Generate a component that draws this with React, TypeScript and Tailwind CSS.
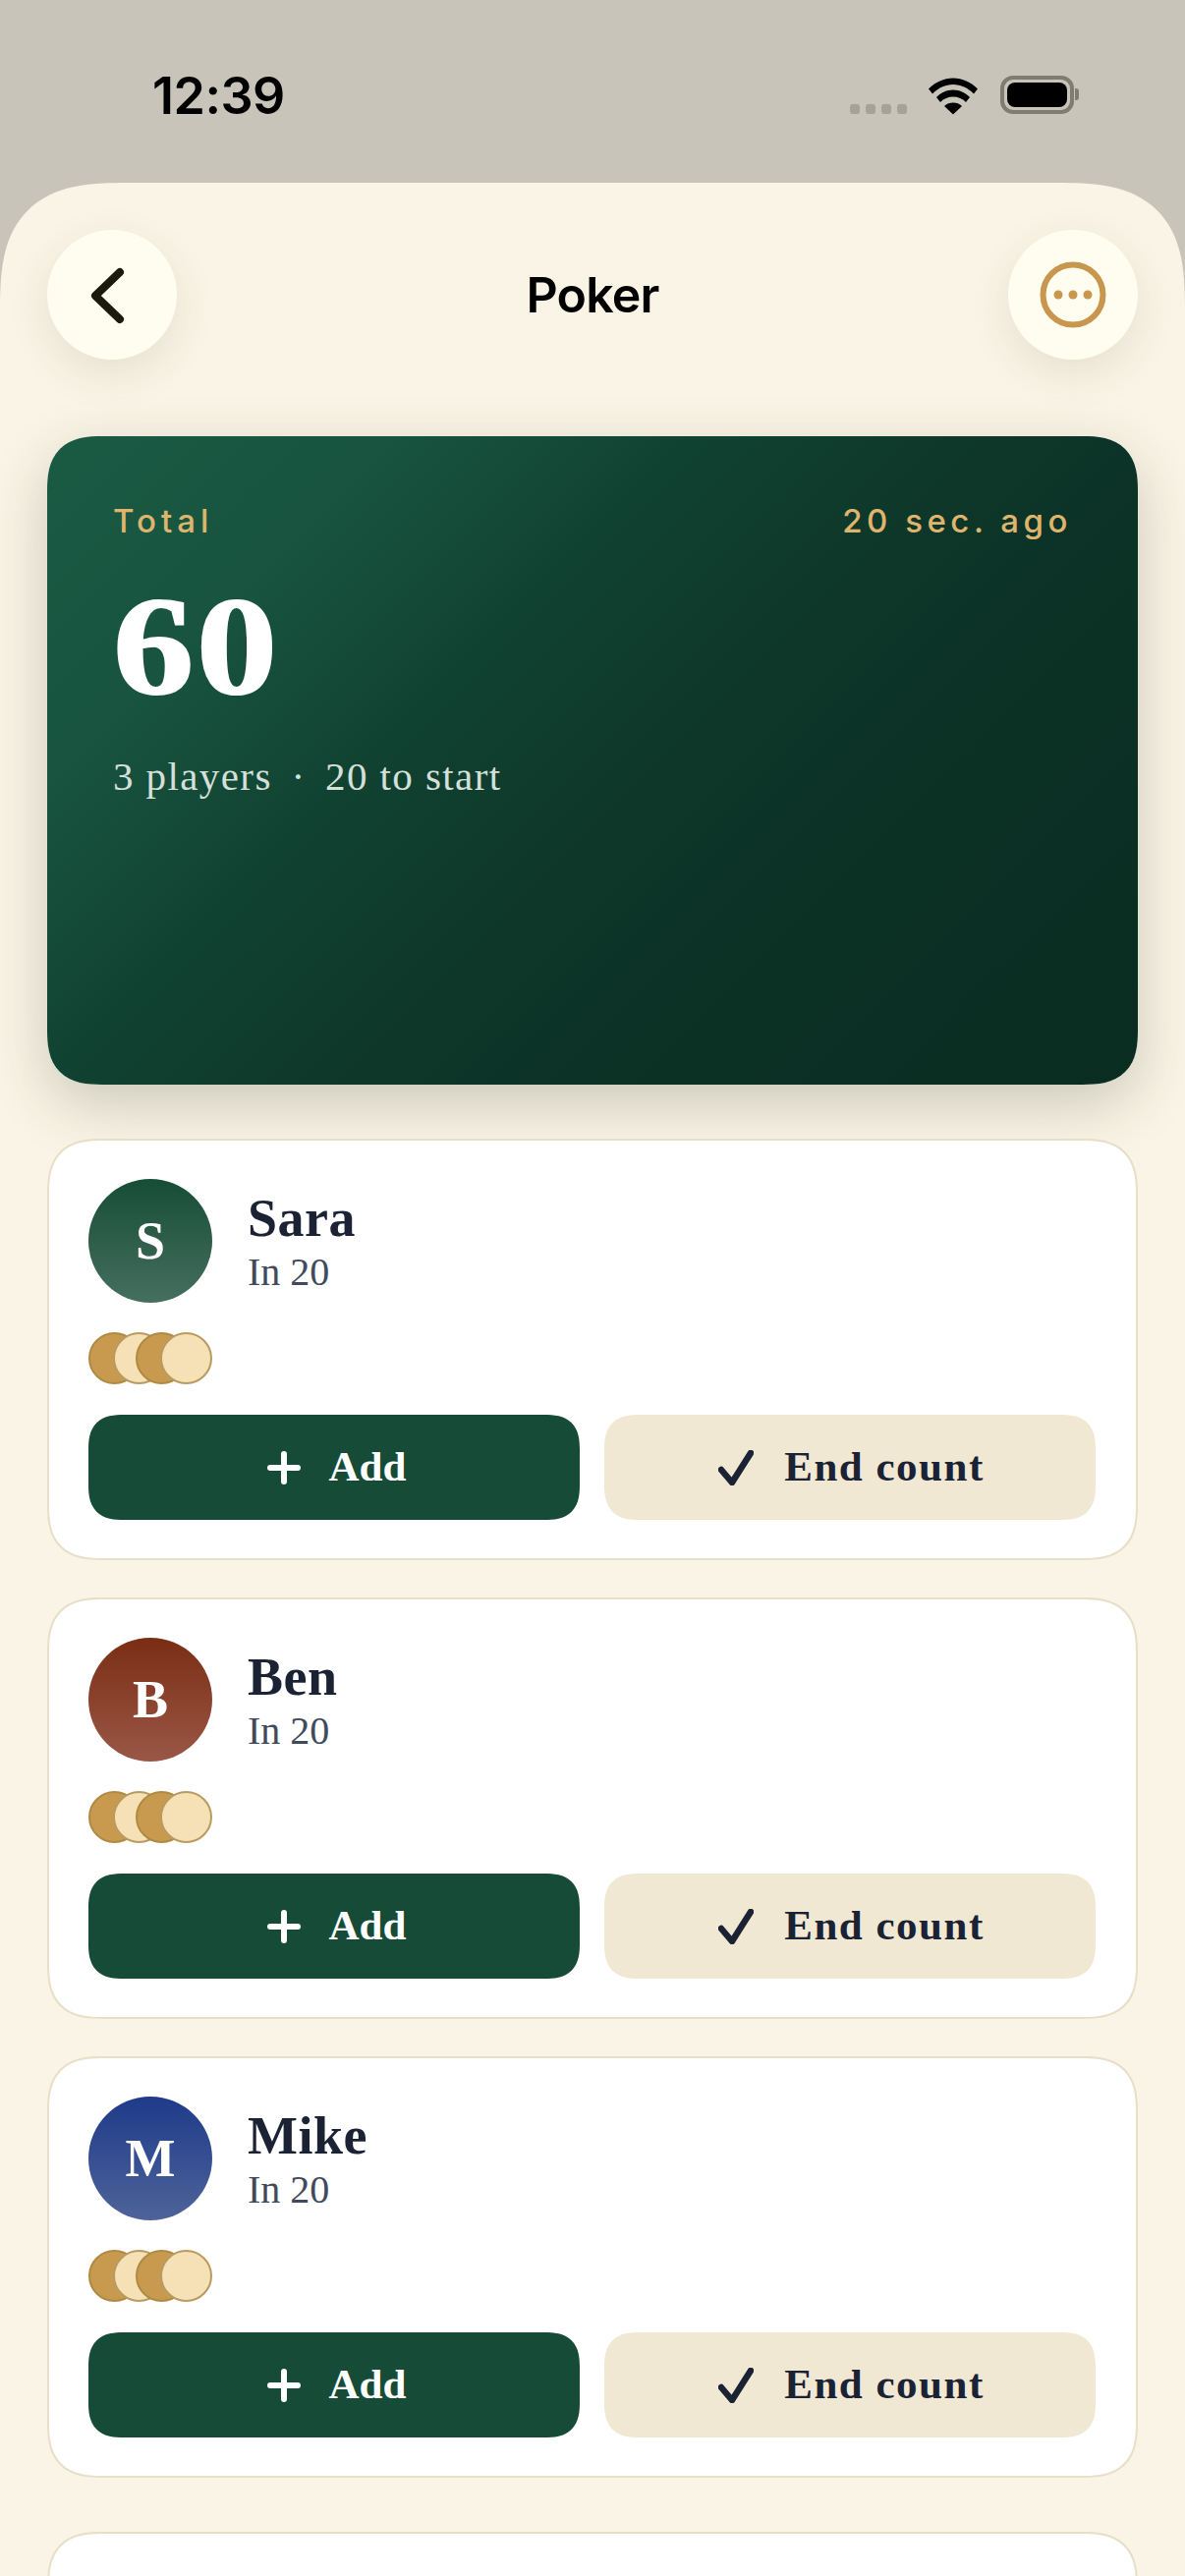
const players = [
  { name: 'Sara', initial: 'S', avatar: 'bg-gradient-to-b from-[#154d37] to-[#456f5f]' },
  { name: 'Ben', initial: 'B', avatar: 'bg-gradient-to-b from-[#7a2d12] to-[#9a5746]' },
  { name: 'Mike', initial: 'M', avatar: 'bg-gradient-to-b from-[#1e3a8a] to-[#4f6399]' },
]

function Coins() {
  return (
    <div className="flex mt-[30px] h-[53px]">
      <div className="w-[53px] h-[53px] rounded-full bg-[#c89a50] border-2 border-[#b08942]" />
      <div className="w-[53px] h-[53px] rounded-full bg-[#f5e1b5] border-2 border-[#b99a60] -ml-[28px]" />
      <div className="w-[53px] h-[53px] rounded-full bg-[#c89a50] border-2 border-[#b08942] -ml-[30px]" />
      <div className="w-[53px] h-[53px] rounded-full bg-[#f5e1b5] border-2 border-[#b99a60] -ml-[28px]" />
    </div>
  )
}

function PlayerCard({ name, initial, avatar }: { name: string; initial: string; avatar: string }) {
  return (
    <div className="h-[429px] rounded-[56px] border-2 border-[#e8dfc8] bg-white px-[40px] pt-[39px] [corner-shape:superellipse(1.4)]">
      <div className="flex items-center gap-[36px]">
        <div className={`w-[126px] h-[126px] rounded-full flex items-center justify-center text-white font-bold text-[54px] ${avatar}`}>
          {initial}
        </div>
        <div className="flex flex-col pt-[3px]">
          <span className="text-[54px] leading-[58px] font-bold tracking-[0.5px] text-[#1a2233]">{name}</span>
          <span className="text-[40px] leading-[46px] mt-[3px] text-[#3f4a5c]">In 20</span>
        </div>
      </div>
      <Coins />
      <div className="flex gap-[25px] mt-[31px]">
        <button className="w-[500px] h-[107px] pl-[5px] rounded-[36px] bg-[#164c37] text-white flex items-center justify-center gap-[29px] text-[43px] font-bold [corner-shape:superellipse(1.4)]">
          <svg width="34" height="34" viewBox="0 0 34 34" fill="none" stroke="currentColor" strokeWidth="6" strokeLinecap="round">
            <path d="M17 3v28M3 17h28" />
          </svg>
          Add
        </button>
        <button className="w-[500px] h-[107px] pl-[3px] rounded-[36px] bg-[#f0e8d3] text-[#1a2233] flex items-center justify-center gap-[31px] text-[43px] tracking-[1.500px] font-bold [corner-shape:superellipse(1.4)]">
          <svg width="36" height="36" viewBox="0 0 36 36" fill="none" stroke="currentColor" strokeWidth="6.5" strokeLinecap="round" strokeLinejoin="round">
            <path d="M3 20l11 13L33 3" />
          </svg>
          End count
        </button>
      </div>
    </div>
  )
}

export default function App() {
  return (
    <div className="w-[1206px] h-[2622px] overflow-hidden bg-[#c8c4b9] font-['Liberation_Serif',serif]">
      <div className="h-[186px] relative font-['Inter',sans-serif]">
        <span className="absolute left-[155px] top-[68px] text-[52px] leading-[60px] font-semibold text-black tracking-[-0.5px]">12:39</span>
        <div className="absolute left-[865px] top-[78px] flex items-start">
          <div className="flex gap-[6px] mt-[28px] mr-[21px]">
            <div className="w-[10px] h-[10px] rounded-[3px] bg-[#a5a297]" />
            <div className="w-[10px] h-[10px] rounded-[3px] bg-[#a5a297]" />
            <div className="w-[10px] h-[10px] rounded-[3px] bg-[#a5a297]" />
            <div className="w-[10px] h-[10px] rounded-[3px] bg-[#a5a297]" />
          </div>
          <svg width="52" height="38" viewBox="0 0 52 38" className="mt-[1px]">
            <path d="M1 11.5C8 4.5 16.5 0.5 26 0.5s18 4 25 11l-4 5C41 10.5 34 7 26 7S11 10.5 5 16.5z" fill="#000" />
            <path d="M9 20c4.800-4.800 10.500-7.500 17-7.500s12.200 2.700 17 7.500l-4 5c-3.600-3.600-8-5.500-13-5.500s-9.400 1.900-13 5.500z" fill="#000" />
            <path d="M17 29c2.500-2.400 5.500-3.500 9-3.500s6.500 1.100 9 3.500l-9 8.500z" fill="#000" />
          </svg>
          <div className="ml-[22px] w-[75px] h-[39px] rounded-[13px] border-[4px] border-[#7f7c72] p-[3px] -mt-[1px]">
            <div className="w-full h-full rounded-[8px] bg-black" />
          </div>
          <div className="w-[4px] h-[12px] mt-[12px] ml-[1px] rounded-r-[3px] bg-[#7f7c72]" />
        </div>
      </div>

      <div className="h-[2436px] rounded-t-[130px] bg-[#faf4e6] px-[48px] pt-[48px] [corner-shape:superellipse(1.5)]">
        <div className="flex items-center justify-between">
          <button className="w-[132px] h-[132px] rounded-full bg-[#fffdf0] shadow-[0_14px_44px_rgba(70,60,30,0.1)] flex items-center justify-center">
            <svg width="132" height="132" viewBox="0 0 132 132" fill="none" stroke="#1c1a0c" strokeWidth="8" strokeLinecap="round" strokeLinejoin="round">
              <path d="M74 43L49 67L74 91" />
            </svg>
          </button>
          <span className="font-['Inter',sans-serif] text-[50px] font-semibold text-black tracking-[-0.8px]">Poker</span>
          <button className="w-[132px] h-[132px] rounded-full bg-[#fffdf0] shadow-[0_14px_44px_rgba(70,60,30,0.1)] flex items-center justify-center">
            <svg width="68" height="68" viewBox="0 0 68 68" fill="none">
              <circle cx="34" cy="34" r="30.500" stroke="#c8964c" strokeWidth="6" />
              <circle cx="19" cy="34" r="4.500" fill="#c8964c" />
              <circle cx="34" cy="34" r="4.500" fill="#c8964c" />
              <circle cx="49" cy="34" r="4.500" fill="#c8964c" />
            </svg>
          </button>
        </div>

        <div className="mt-[78px] h-[660px] rounded-[56px] px-[67px] pt-[66px] text-white bg-[linear-gradient(135deg,#1a5a43_0%,#185440_20%,#104131_38%,#0e3729_55%,#0c3327_63%,#0a2c21_100%)] shadow-[0_20px_60px_rgba(40,50,30,0.22)] [corner-shape:superellipse(1.4)]">
          <div className="flex justify-between font-['Inter',sans-serif] text-[33px] leading-[40px] font-medium text-[#dfb56e]">
            <span className="tracking-[5px]">Total</span>
            <span className="tracking-[4.500px]">20 sec. ago</span>
          </div>
          <div className="mt-[28px] text-[142px] leading-[160px] font-bold tracking-[2px] origin-left scale-x-[1.16] [-webkit-text-stroke:2px_white]">60</div>
          <div className="mt-[27px] text-[41px] leading-[50px] tracking-[1.400px] text-[#d5e0da]">
            3 players <span className="inline-block mx-[8px]">·</span> 20 to start
          </div>
        </div>

        <div className="mt-[55px] flex flex-col gap-[38px]">
          {players.map((p) => (
            <PlayerCard key={p.name} {...p} />
          ))}
        </div>

        <div className="mt-[55px] h-[429px] rounded-[56px] border-2 border-[#e8dfc8] bg-white [corner-shape:superellipse(1.4)]" />
      </div>
    </div>
  )
}
